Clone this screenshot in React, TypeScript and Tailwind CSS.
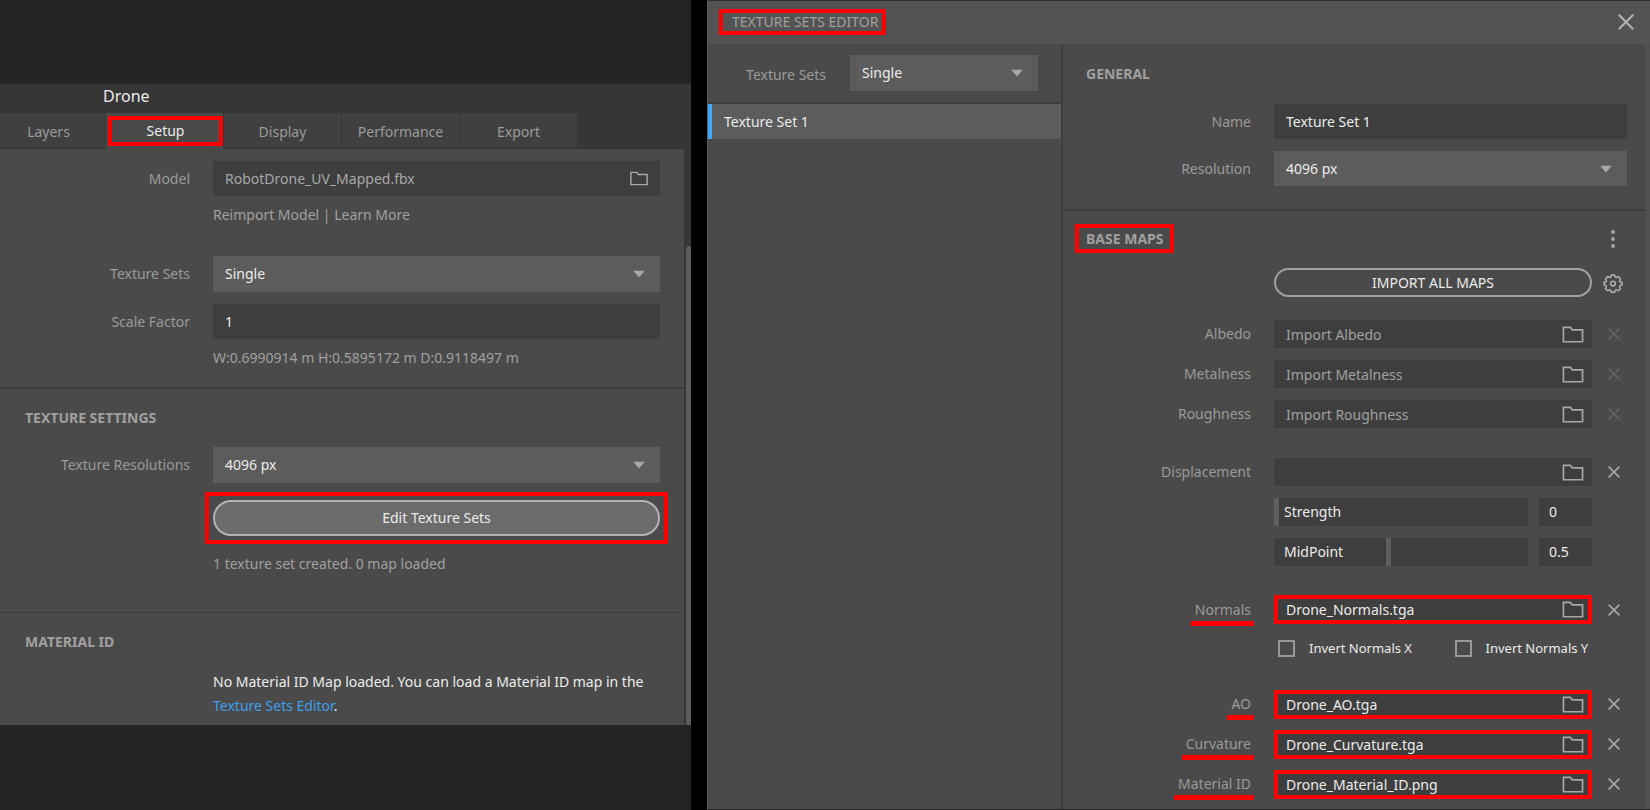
import { useState } from 'react';
import type { ReactNode } from 'react';

const tabs = ['Layers', 'Setup', 'Display', 'Performance', 'Export'];

const emptyMaps = ['Albedo', 'Metalness', 'Roughness'];

const bakedMaps = [
  { label: 'AO', file: 'Drone_AO.tga' },
  { label: 'Curvature', file: 'Drone_Curvature.tga' },
  { label: 'Material ID', file: 'Drone_Material_ID.png' },
];

function FolderIcon({ className }: { className: string }) {
  return (
    <svg className={className} viewBox="0 0 20 16" fill="none" stroke="#a8a8a8" strokeWidth="1.6">
      <path d="M1 1.2h6.6l1.6 2.4H19v11.2H1z" />
    </svg>
  );
}

function CrossIcon({ className }: { className: string }) {
  return (
    <svg className={className} viewBox="0 0 12 12" fill="none" stroke="currentColor" strokeWidth="1.5">
      <path d="M.6.6l10.8 10.8M11.4.6L.6 11.4" />
    </svg>
  );
}

function GearIcon() {
  return (
    <svg className="size-5" viewBox="0 0 24 24" fill="none" stroke="#a8a8a8" strokeWidth="2" strokeLinejoin="round">
      <path d="M10 2.5h4l.6 2.2 1.6.7 2.2-1.1 2.6 2.6-1.1 2.2.7 1.6 2.2.6v3l-2.2.6-.7 1.6 1.1 2.2-2.6 2.6-2.2-1.1-1.6.7-.6 2.1h-4l-.6-2.1-1.6-.7-2.2 1.1L3 18.7l1.1-2.2-.7-1.6-2.2-.6v-3l2.2-.6.7-1.6L3 6.9l2.6-2.6 2.2 1.1 1.6-.7z" />
      <circle cx="12" cy="12.7" r="2.8" />
    </svg>
  );
}

function Select({ id, value, className }: { id: string; value: string; className: string }) {
  return (
    <div className={`relative ${className}`}>
      <select id={id} className="size-full appearance-none bg-[#5c5c5c] pl-3 text-[#ececec] outline-none">
        <option>{value}</option>
      </select>
      <svg className="pointer-events-none absolute right-[15px] top-1/2 h-[7px] w-3 -translate-y-1/2" viewBox="0 0 12 7">
        <path d="M0 0h12L6 7z" fill="#a8a8a8" />
      </svg>
    </div>
  );
}

// label on the left, right aligned, control fills the rest
function Row({ id, label, className, children }: { id: string; label: string; className: string; children: ReactNode }) {
  return (
    <div className={`flex items-center ${className}`}>
      <label htmlFor={id} className="w-[190px] shrink-0 text-right text-[#9a9a9a]">
        {label}
      </label>
      <div className="ml-[23px] mr-6 flex-1">{children}</div>
    </div>
  );
}

function MapRow({ label, file, marked, disabled }: { label: string; file?: string; marked?: boolean; disabled?: boolean }) {
  const id = `map-${label.toLowerCase().replace(' ', '-')}`;
  return (
    <div className={`flex items-center ${marked ? 'h-[29px]' : 'h-7'}`}>
      <div className="w-[188px] shrink-0 text-right text-[#9a9a9a]">
        <label htmlFor={id} className="relative inline-block">
          {label}
          {marked && <span className="absolute -bottom-1.5 -left-1 -right-[3px] h-[5px] bg-[#fe0000]" />}
        </label>
      </div>
      <div className={`ml-[23px] flex h-full min-w-0 flex-1 items-center bg-[#3e3e3e] ${marked ? 'border-4 border-[#fe0000]' : ''}`}>
        <input
          id={id}
          defaultValue={file}
          placeholder={disabled ? `Import ${label}` : undefined}
          className={`h-full min-w-0 flex-1 bg-transparent text-[#ececec] outline-none placeholder:text-[#a0a0a0] ${marked ? 'pl-2' : 'pl-3'}`}
        />
        <button aria-label={`Browse ${label}`} className={marked ? 'mr-1' : 'mr-2'}>
          <FolderIcon className="h-[17px] w-[22px]" />
        </button>
      </div>
      <button
        aria-label={`Clear ${label}`}
        disabled={disabled}
        className={`ml-4 mr-[25px] ${disabled ? 'text-[#636363]' : 'text-[#a8a8a8]'}`}
      >
        <CrossIcon className="size-3" />
      </button>
    </div>
  );
}

function SliderRow({ label, initial, text }: { label: string; initial: number; text: string }) {
  const [value, setValue] = useState(initial);
  const id = `slider-${label.toLowerCase()}`;
  return (
    <div className="ml-[211px] mr-[53px] flex h-7 gap-[11px]">
      <div className="relative flex-1">
        <input
          id={id}
          type="range"
          min={0}
          max={100}
          value={value}
          onChange={(e) => setValue(Number(e.target.value))}
          className="block size-full appearance-none bg-[#3e3e3e] [&::-webkit-slider-thumb]:h-7 [&::-webkit-slider-thumb]:w-[5px] [&::-webkit-slider-thumb]:appearance-none [&::-webkit-slider-thumb]:bg-[#5e5e5e]"
        />
        <label htmlFor={id} className="pointer-events-none absolute inset-y-0 left-[10px] flex items-center text-[#ececec]">
          {label}
        </label>
      </div>
      <input aria-label={`${label} value`} defaultValue={text} className="w-[53px] bg-[#3e3e3e] pl-[10px] text-[#ececec] outline-none" />
    </div>
  );
}

function CheckItem({ label }: { label: string }) {
  return (
    <label className="flex flex-1 items-center gap-[14px] whitespace-nowrap text-[13px] text-[#ececec]">
      <input type="checkbox" className="size-[17px] shrink-0 appearance-none border-2 border-[#989898] checked:bg-[#989898]" />
      {label}
    </label>
  );
}

function ProjectPanel() {
  const [tab, setTab] = useState('Setup');

  return (
    <section className="min-w-0 bg-[#242424] pt-[84px]">
      <div className="bg-[#363636]">
        <h1 className="h-[29px] pl-[103px] text-base leading-6 text-[#ececec]">Drone</h1>
        <nav className="flex h-9">
          {tabs.map((t) => (
            <button
              key={t}
              onClick={() => setTab(t)}
              className={`w-[118px] border-r border-[#363636] first:w-[106px] first:pr-2 ${
                t === tab ? 'bg-[#4a4a4a] py-[3px] pl-[2px] text-[#ececec]' : 'border-b bg-[#404040] pt-[2px] text-[#9a9a9a]'
              }`}
            >
              {t === tab ? <span className="flex h-full items-center justify-center border-4 border-[#fe0000]">{t}</span> : t}
            </button>
          ))}
        </nav>

        <div className="flex">
          <div className="min-w-0 flex-1 bg-[#4a4a4a]">
            <div className="h-60 border-b-2 border-[#3c3c3c] pt-3">
              <Row id="model" label="Model" className="h-[35px]">
                <div className="flex h-[35px] items-center bg-[#3e3e3e]">
                  <input
                    id="model"
                    defaultValue="RobotDrone_UV_Mapped.fbx"
                    className="h-full min-w-0 flex-1 bg-transparent pl-3 text-[#a8a8a8] outline-none"
                  />
                  <button aria-label="Browse model" className="mr-3">
                    <FolderIcon className="h-[15px] w-[18px]" />
                  </button>
                </div>
              </Row>
              <p className="ml-[213px] mt-[7px] leading-6 text-[#a0a0a0]">
                <a href="#reimport">Reimport Model</a> | <a href="#learn">Learn More</a>
              </p>
              <Row id="sets" label="Texture Sets" className="mt-[29px] h-9">
                <Select id="sets" value="Single" className="h-9" />
              </Row>
              <Row id="scale" label="Scale Factor" className="mt-3 h-[35px]">
                <input id="scale" defaultValue="1" className="block h-[35px] w-full bg-[#3e3e3e] pl-3 text-[#ececec] outline-none" />
              </Row>
              <p className="ml-[213px] mt-[7px] leading-6 text-[#a0a0a0]">W:0.6990914 m H:0.5895172 m D:0.9118497 m</p>
            </div>

            <div className="h-56 border-b border-[#3c3c3c] pt-[17px]">
              <h2 className="pl-[25px] leading-6 font-bold text-[#a0a0a0]">TEXTURE SETTINGS</h2>
              <Row id="resolutions" label="Texture Resolutions" className="mt-[17px] h-9">
                <Select id="resolutions" value="4096 px" className="h-9" />
              </Row>
              <div className="ml-[205px] mr-4 mt-[9px] border-4 border-[#fe0000] p-1">
                <button className="h-9 w-full rounded-full border-2 border-[#b4b4b4] bg-[#6b6b6b] text-[#ececec]">Edit Texture Sets</button>
              </div>
              <p className="ml-[213px] mt-2 leading-6 text-[#a0a0a0]">1 texture set created. 0 map loaded</p>
            </div>

            <div className="h-28 pt-[17px]">
              <h2 className="pl-[25px] leading-6 font-bold text-[#a0a0a0]">MATERIAL ID</h2>
              <p className="ml-[213px] mr-6 mt-4 leading-6 text-[#ececec]">
                No Material ID Map loaded. You can load a Material ID map in the{' '}
                <a href="#editor" className="text-[#3d9fee]">
                  Texture Sets Editor
                </a>
                .
              </p>
            </div>
          </div>
          <div className="w-[7px] pl-[2px] pt-[97px]">
            <div className="h-full rounded-tl bg-[#5c5c5c]" />
          </div>
        </div>
      </div>
    </section>
  );
}

function EditorPanel() {
  return (
    <section className="flex min-w-0 flex-col border-y border-l border-t-[#303030] border-b-[#242424] border-l-[#5c5c5c] bg-[#4a4a4a]">
      <header className="flex h-[43px] items-center justify-between bg-[#535353] pb-[2px] pl-[11px] pr-4">
        <h1 className="border-4 border-[#fe0000] pl-[9px] pr-1 leading-[18px] text-[#a0a0a0]">TEXTURE SETS EDITOR</h1>
        <button aria-label="Close" className="text-[#b4b4b4]">
          <CrossIcon className="size-4" />
        </button>
      </header>

      <div className="flex flex-1">
        <aside className="w-[355px] shrink-0 border-r-2 border-[#3e3e3e]">
          <div className="flex h-[60px] items-center border-b-2 border-[#3e3e3e]">
            <label htmlFor="editor-sets" className="w-[118px] pt-[3px] text-right text-[#9a9a9a]">
              Texture Sets
            </label>
            <Select id="editor-sets" value="Single" className="ml-6 mr-[23px] h-9 flex-1" />
          </div>
          <button className="block h-[35px] w-full border-l-4 border-[#42a5f5] bg-[#5c5c5c] pl-3 text-left text-[#ececec]">
            Texture Set 1
          </button>
        </aside>

        <div className="min-w-0 flex-1 border-r-[5px] border-[#505050]">
          <div className="h-[167px] border-b-2 border-[#3c3c3c] pt-[18px]">
            <h2 className="pl-[23px] leading-6 font-bold text-[#a0a0a0]">GENERAL</h2>
            <div className="mr-[18px] mt-[18px] flex h-[35px] items-center">
              <label htmlFor="set-name" className="w-[188px] shrink-0 text-right text-[#9a9a9a]">
                Name
              </label>
              <input
                id="set-name"
                defaultValue="Texture Set 1"
                className="ml-[23px] h-full min-w-0 flex-1 bg-[#3e3e3e] pl-3 text-[#ececec] outline-none"
              />
            </div>
            <div className="mr-[18px] mt-3 flex h-[35px] items-center">
              <label htmlFor="set-resolution" className="w-[188px] shrink-0 text-right text-[#9a9a9a]">
                Resolution
              </label>
              <Select id="set-resolution" value="4096 px" className="ml-[23px] h-full flex-1" />
            </div>
          </div>

          <div className="pt-[13px]">
            <div className="flex items-center justify-between pl-3 pr-[30px]">
              <h2 className="border-4 border-[#fe0000] pl-[7px] pr-[6px] leading-[21px] font-bold text-[#a0a0a0]">BASE MAPS</h2>
              <button aria-label="More options">
                <svg className="h-[18px] w-1" viewBox="0 0 4 18" fill="#a8a8a8">
                  <circle cx="2" cy="2" r="1.9" />
                  <circle cx="2" cy="9" r="1.9" />
                  <circle cx="2" cy="16" r="1.9" />
                </svg>
              </button>
            </div>
            <div className="mt-[15px] flex items-center pl-[211px] pr-[22px]">
              <button className="h-[29px] flex-1 rounded-full border-2 border-[#a0a0a0] text-[#ececec]">IMPORT ALL MAPS</button>
              <button aria-label="Import settings" className="ml-[11px]">
                <GearIcon />
              </button>
            </div>

            <div className="mt-[23px] flex flex-col gap-3">
              {emptyMaps.map((m) => (
                <MapRow key={m} label={m} disabled />
              ))}
            </div>

            <div className="mt-[30px] flex flex-col gap-3">
              <MapRow label="Displacement" />
              <SliderRow label="Strength" initial={0} text="0" />
              <SliderRow label="MidPoint" initial={45} text="0.5" />
            </div>

            <div className="mt-[29px]">
              <MapRow label="Normals" file="Drone_Normals.tga" marked />
              <div className="ml-[215px] mr-[14px] mt-[15px] flex">
                <CheckItem label="Invert Normals X" />
                <CheckItem label="Invert Normals Y" />
              </div>
            </div>

            <div className="mt-8 flex flex-col gap-[11px]">
              {bakedMaps.map((m) => (
                <MapRow key={m.label} label={m.label} file={m.file} marked />
              ))}
            </div>
          </div>
        </div>
      </div>
    </section>
  );
}

export default function App() {
  return (
    <main className="grid min-h-screen grid-cols-[691fr_943fr] gap-4 bg-black font-['Noto_Sans','Open_Sans',sans-serif] text-sm">
      <ProjectPanel />
      <EditorPanel />
    </main>
  );
}
